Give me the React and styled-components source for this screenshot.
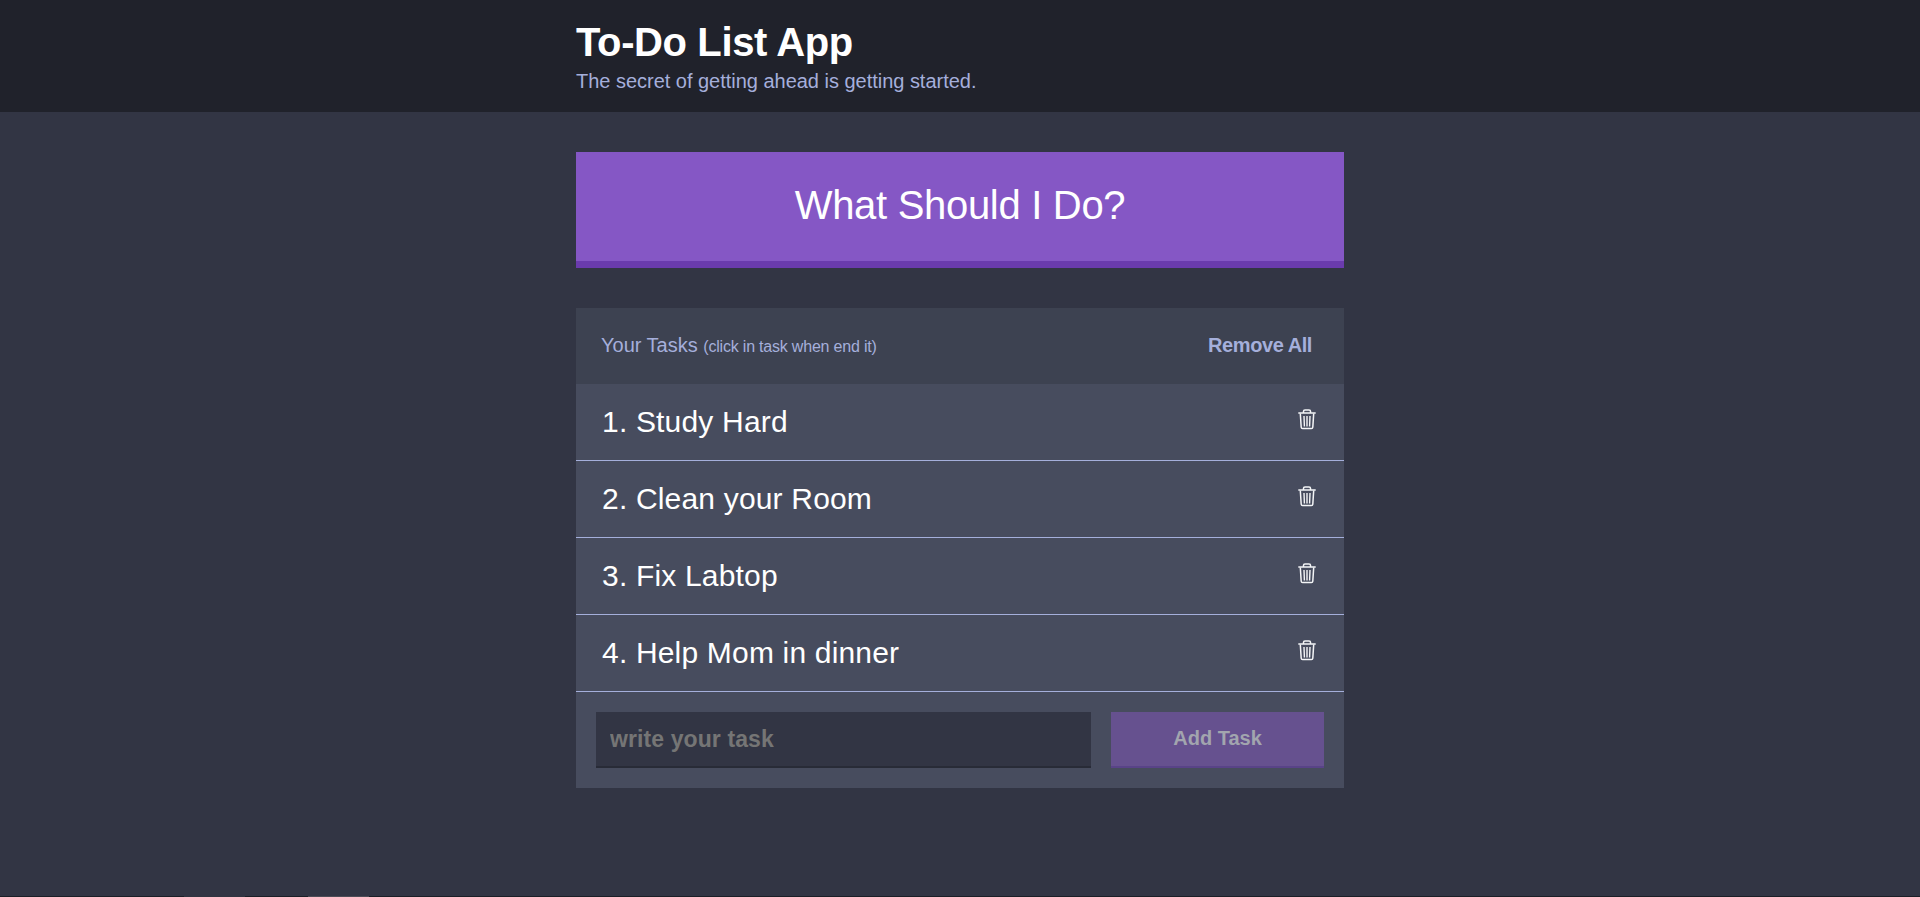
import React, { useState } from "react";
import styled, { createGlobalStyle } from "styled-components";

const GlobalStyle = createGlobalStyle`
  * { box-sizing: border-box; margin: 0; padding: 0; }
  body {
    background: #323544;
    color: #fff;
    font-family: Arial, "Liberation Sans", sans-serif;
    -webkit-font-smoothing: none;
  }
`;

const Page = styled.div`
  display: flex;
  flex-direction: column;
  height: 897px;
  overflow: hidden;
`;

const Container = styled.div`
  width: 768px;
  margin: 0 auto;
`;

const Header = styled.header`
  height: 112px;
  padding-top: 19px;
  background: #20222b;
`;

const Title = styled.h1`
  font-size: 40px;
  line-height: 46px;
  letter-spacing: -0.38px;
`;

const Subtitle = styled.p`
  font-size: 20px;
  line-height: 23px;
  padding-top: 5px;
  letter-spacing: -0.02px;
  color: #a5afdb;
`;

const Main = styled(Container).attrs({ as: "main" })`
  display: flex;
  flex-direction: column;
  flex: 1;
  gap: 40px;
  padding-top: 40px;
`;

const DecideButton = styled.button`
  height: 116px;
  padding-bottom: 2px;
  border: 0;
  border-bottom: 7px solid #6a3bad;
  background: #8557c5;
  color: #fff;
  font: 40px "Liberation Sans", sans-serif;
  letter-spacing: -0.3px;
`;

const Card = styled.section`
  background: #474c5e;
`;

const CardHeader = styled.div`
  display: flex;
  justify-content: space-between;
  align-items: center;
  height: 76px;
  padding: 0 32px 2px 25px;
  background: #3d4251;
  color: #a5afdb;
`;

const CardTitle = styled.h2`
  font-size: 20px;
  font-weight: 400;
`;

const Hint = styled.span`
  font-size: 16px;
  letter-spacing: -0.2px;
`;

const RemoveAll = styled.button`
  border: 0;
  background: none;
  color: inherit;
  font: bold 20px "Liberation Sans", sans-serif;
  letter-spacing: -0.43px;
`;

const Task = styled.li`
  display: flex;
  justify-content: space-between;
  align-items: center;
  height: 77px;
  padding: 0 28px 0 26px;
  border-bottom: 1px solid #a5afdb;
  list-style: none;
  font-size: 30px;
  letter-spacing: 0.18px;
`;

const TrashButton = styled.button`
  display: flex;
  padding-bottom: 5px;
  border: 0;
  background: none;
`;

const Form = styled.form`
  display: flex;
  gap: 20px;
  padding: 20px;
`;

const TaskInput = styled.input`
  width: 495px;
  height: 56px;
  padding: 0 14px;
  border: 0;
  border-bottom: 2px solid #282b37;
  outline: 0;
  background: #323544;
  color: #fff;
  font: bold 23px "Liberation Sans", sans-serif;
  letter-spacing: 0.1px;
  &::placeholder { color: #757575; }
`;

const AddButton = styled.button`
  flex: 1;
  height: 56px;
  padding-bottom: 2px;
  border: 0;
  border-bottom: 2px solid #594388;
  background: #66518f;
  color: #a2a5ae;
  font: bold 20px "Liberation Sans", sans-serif;
`;

const BottomEdge = styled.footer`
  display: flex;
  flex: none;
  gap: 63px;
  height: 1px;
  padding-left: 184px;
  background: #1b1f27;
`;

const EdgeMark = styled.span`
  width: 61px;
  background: ${({ $color }) => $color};
`;

const TrashIcon = () => (
  <svg width="18" height="21" viewBox="0 0 18 21" fill="none" stroke="#f4f5f7">
    <path d="M.3 4h17.400M5.500 3.700V2.300Q5.500 1 7 1h4q1.500 0 1.500 1.300v1.400" strokeWidth="1.500" />
    <path d="M2.300 4.500 3.200 18.300q.1 1.200 1.400 1.200h8.800q1.300 0 1.400-1.200L15.700 4.500" strokeWidth="1.500" />
    <path d="M6 7l.4 10.500M9 7v10.500M12 7l-.4 10.500" strokeWidth="1.400" />
  </svg>
);

const tasks = ["Study Hard", "Clean your Room", "Fix Labtop", "Help Mom in dinner"];

export default function App() {
  const [draft, setDraft] = useState("");
  return (
    <Page>
      <GlobalStyle />
      <Header>
        <Container>
          <Title>To-Do List App</Title>
          <Subtitle>The secret of getting ahead is getting started.</Subtitle>
        </Container>
      </Header>
      <Main>
        <DecideButton>What Should I Do?</DecideButton>
        <Card>
          <CardHeader>
            <CardTitle>Your Tasks <Hint>(click in task when end it)</Hint></CardTitle>
            <RemoveAll>Remove All</RemoveAll>
          </CardHeader>
          <ul>
            {tasks.map((task, i) => (
              <Task key={task}>
                <span>{i + 1}. {task}</span>
                <TrashButton aria-label="Remove"><TrashIcon /></TrashButton>
              </Task>
            ))}
          </ul>
          <Form onSubmit={(e) => e.preventDefault()}>
            <TaskInput placeholder="write your task" value={draft} onChange={(e) => setDraft(e.target.value)} />
            <AddButton>Add Task</AddButton>
          </Form>
        </Card>
      </Main>
      <BottomEdge>
        <EdgeMark $color="#303440" />
        <EdgeMark $color="#4c4c56" />
      </BottomEdge>
    </Page>
  );
}
